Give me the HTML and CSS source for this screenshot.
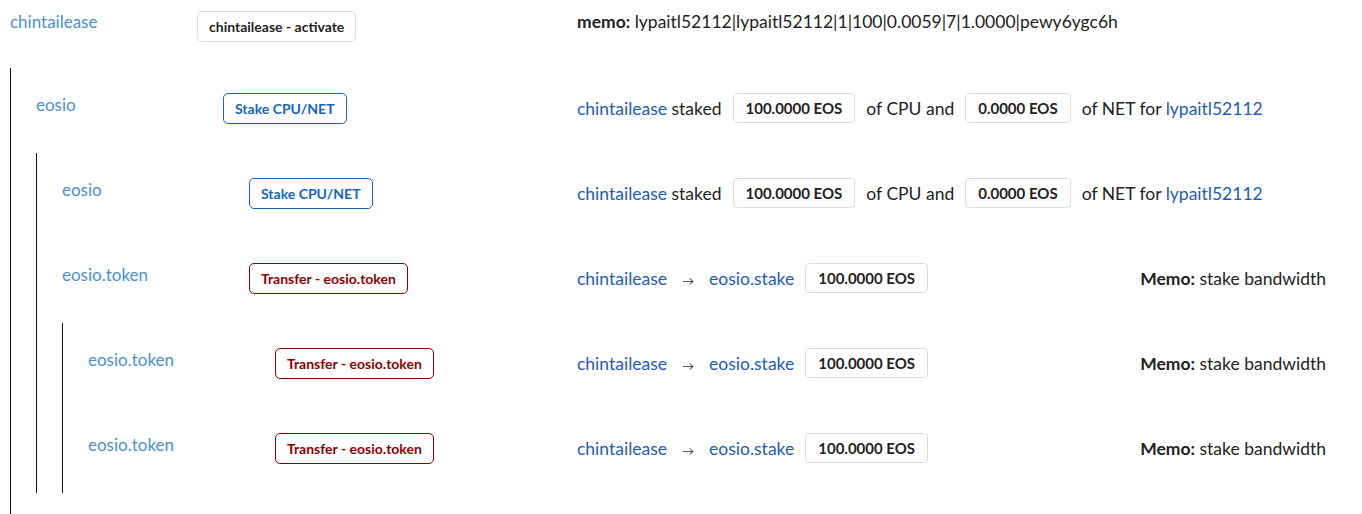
FILE: index.html
```html
<!DOCTYPE html>
<html>
<head>
<meta charset="utf-8">
<link rel="stylesheet" href="styles.css">
</head>
<body>
<div class="page">
  <div class="node">
    <div class="row root">
      <div class="name">chintailease</div>
      <div class="act"><span class="btn btn-gray">chintailease - activate</span></div>
      <div class="content"><span class="memo-l"><b>memo:</b> lypaitl52112|lypaitl52112|1|100|0.0059|7|1.0000|pewy6ygc6h</span></div>
    </div>
    <div class="children top">
      <div class="node">
        <div class="row">
          <div class="name">eosio</div>
          <div class="act"><span class="btn btn-blue">Stake CPU/NET</span></div>
          <div class="content"><span class="line"><a class="link">chintailease</a> staked<span class="badge">100.0000 EOS</span>of CPU and<span class="badge">0.0000 EOS</span>of NET for <a class="link">lypaitl52112</a></span></div>
        </div>
        <div class="children">
          <div class="node">
            <div class="row">
              <div class="name">eosio</div>
              <div class="act"><span class="btn btn-blue">Stake CPU/NET</span></div>
              <div class="content"><span class="line"><a class="link">chintailease</a> staked<span class="badge">100.0000 EOS</span>of CPU and<span class="badge">0.0000 EOS</span>of NET for <a class="link">lypaitl52112</a></span></div>
            </div>
          </div>
          <div class="node">
            <div class="row">
              <div class="name">eosio.token</div>
              <div class="act"><span class="btn btn-red">Transfer - eosio.token</span></div>
              <div class="content"><span class="line"><a class="link">chintailease</a><span class="arrow">→</span><a class="link">eosio.stake</a><span class="badge">100.0000 EOS</span></span><span class="memo"><b>Memo:</b> stake bandwidth</span></div>
            </div>
            <div class="children">
              <div class="node">
                <div class="row">
                  <div class="name">eosio.token</div>
                  <div class="act"><span class="btn btn-red">Transfer - eosio.token</span></div>
                  <div class="content"><span class="line"><a class="link">chintailease</a><span class="arrow">→</span><a class="link">eosio.stake</a><span class="badge">100.0000 EOS</span></span><span class="memo"><b>Memo:</b> stake bandwidth</span></div>
                </div>
              </div>
              <div class="node">
                <div class="row">
                  <div class="name">eosio.token</div>
                  <div class="act"><span class="btn btn-red">Transfer - eosio.token</span></div>
                  <div class="content"><span class="line"><a class="link">chintailease</a><span class="arrow">→</span><a class="link">eosio.stake</a><span class="badge">100.0000 EOS</span></span><span class="memo"><b>Memo:</b> stake bandwidth</span></div>
                </div>
              </div>
            </div>
          </div>
        </div>
      </div>
    </div>
  </div>
</div>
</body>
</html>
```
FILE: styles.css
```css
html, body {
  margin: 0;
  padding: 0;
  background: #fff;
}
body {
  font-family: Lato, "Liberation Sans", sans-serif;
  color: #222;
  font-size: 17px;
}
.page {
  padding: 0 36px 0 10px;
}
.row {
  display: grid;
  grid-template-columns: 187px 1fr 749px;
  align-items: start;
  padding: 25px 0 29px;
}
.row.root {
  padding: 11px 0 26px;
}
.name {
  color: #4a8fd4;
  font-size: 17px;
  line-height: 20px;
  margin-top: 2px;
}
.root .name {
  margin-top: 1px;
}
.act {
  display: flex;
}
.btn {
  display: inline-flex;
  align-items: center;
  height: 29px;
  padding: 0 11px;
  border: 1px solid #ddd;
  border-radius: 5px;
  font-size: 14px;
  font-weight: 700;
}
.btn-gray { color: #222; border-color: #ddd; }
.btn-blue { color: #1565c0; border-color: #1565c0; }
.btn-red { color: #8b0000; border-color: #8b0000; }
.content {
  display: flex;
  justify-content: space-between;
  align-items: center;
  min-height: 30px;
  font-size: 17.5px;
}
.root .content {
  min-height: 20px;
  line-height: 20px;
  margin-top: 1px;
}
.line {
  display: flex;
  align-items: center;
  white-space: pre;
}
.link {
  color: #1e5bb8;
}
.badge {
  display: inline-flex;
  align-items: center;
  height: 28px;
  padding: 0 12px;
  margin: 0 11px;
  border: 1px solid #ddd;
  border-radius: 4px;
  font-size: 15px;
  font-weight: 700;
  color: #222;
}
.arrow {
  font-size: 12px;
  margin: 4px 15px 0;
  color: #333;
}
.children {
  border-left: 1px solid #111;
  padding-left: 25px;
}
.children.top {
  padding-bottom: 40px;
}
```
